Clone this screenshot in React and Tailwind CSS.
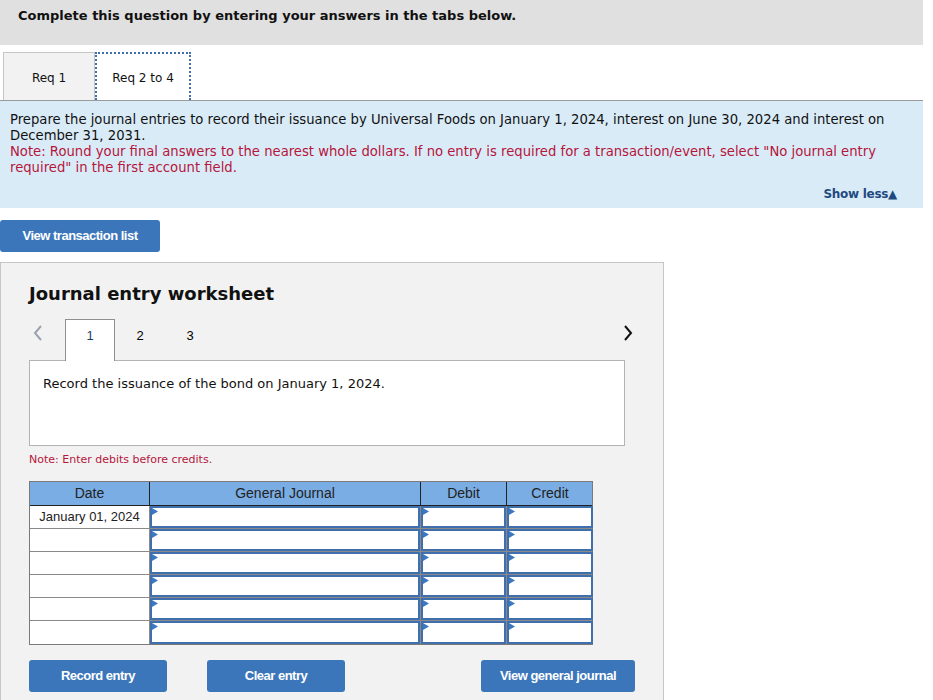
import React from "react";

const verdana = { fontFamily: '"DejaVu Sans", Verdana, sans-serif' };

function Tri() {
  return (
    <svg className="absolute left-0 top-0" width="6" height="7" viewBox="0 0 6 7">
      <polygon points="0,0 6,3.5 0,7" fill="#3b78c4" />
    </svg>
  );
}

function InputCell() {
  return (
    <div className="relative h-full bg-white border-2 border-[#3f70ad]">
      <Tri />
    </div>
  );
}

function Row({ date, last }) {
  return (
    <div className={`grid grid-cols-[120px_271px_86px_86px] h-[23px] ${last ? "" : "border-b border-[#8a8a8a]"}`}>
      <div className="bg-white border-r border-[#8a8a8a] flex items-center justify-center text-[13px] text-[#222] font-['Liberation_Sans',Arial,sans-serif]">
        {date}
      </div>
      <div className="border-r border-[#8a8a8a] bg-[#8a8a8a]">
        <InputCell />
      </div>
      <div className="border-r border-[#8a8a8a] bg-[#8a8a8a]">
        <InputCell />
      </div>
      <div className="bg-[#8a8a8a]">
        <InputCell />
      </div>
    </div>
  );
}

export default function App() {
  const rows = ["January 01, 2024", "", "", "", "", ""];
  return (
    <div className="w-[923px] bg-white text-[13px] text-black" style={verdana}>
      {/* header bar */}
      <div className="h-[45px] bg-[#e0e0e0] px-[18px] pt-[6px] font-bold text-[13px] text-[#111]">
        Complete this question by entering your answers in the tabs below.
      </div>

      {/* tabs */}
      <div className="flex pl-[3px] pt-[7px] border-b border-[#9a9a9a]">
        <div className="w-[92px] h-[48px] bg-[#f2f2f2] border border-b-0 border-[#c6c6c6] flex items-center justify-center pt-[2px] text-[12px] text-[#111]">
          Req 1
        </div>
        <div className="w-[96px] h-[48px] bg-white border-2 border-b-0 border-dotted border-[#3f70ad] flex items-center justify-center pt-[2px] text-[12px] text-[#111]">
          Req 2 to 4
        </div>
      </div>

      {/* info panel */}
      <div className="bg-[#daebf8] pl-[10px] pr-[26px] pt-[11px] pb-[6px] text-[13.2px] leading-[16px]">
        <p className="text-[#111]">
          Prepare the journal entries to record their issuance by Universal Foods on January 1, 2024, interest on June 30, 2024 and interest on December 31, 2031.
        </p>
        <p className="text-[#b5163b]">
          Note: Round your final answers to the nearest whole dollars. If no entry is required for a transaction/event, select "No journal entry required" in the first account field.
        </p>
        <div className="flex justify-end mt-[10px]">
          <span className="font-bold text-[12px] text-[#1f4a80] tracking-[-0.3px]">Show less▲</span>
        </div>
      </div>

      {/* view transaction list */}
      <div className="mt-[12px]">
        <button className="w-[160px] h-[32px] rounded-[3px] bg-[#3b76bb] text-white text-[13px] font-bold tracking-[-0.5px] font-['Liberation_Sans',Arial,sans-serif]">
          View transaction list
        </button>
      </div>

      {/* worksheet */}
      <div className="mt-[10px] w-[664px] h-[438px] bg-[#f2f2f2] border border-b-0 border-[#c6c6c6] pl-[28px] pr-[38px]">
        <h2 className="pt-[19px] text-[18px] font-bold text-[#111] leading-[24px]">
          Journal entry worksheet
        </h2>

        <div className="mt-[13px] flex items-end h-[41px] relative">
          <span className="w-[36px] h-[41px] flex items-start justify-start pl-[4px] pt-[6px]">
            <svg width="10" height="16" viewBox="0 0 10 16">
              <path d="M8 1 L2 8 L8 15" stroke="#9aa3ad" strokeWidth="2" fill="none" />
            </svg>
          </span>
          <div className="w-[50px] h-[42px] -mb-px bg-white border border-b-0 border-[#8f8f8f] flex items-start justify-center pt-[6px] text-[13px] text-[#1c3f66] font-['Liberation_Sans',Arial,sans-serif] relative z-10">
            1
          </div>
          <div className="w-[50px] h-[41px] flex items-start justify-center pt-[7px] text-[13px] font-['Liberation_Sans',Arial,sans-serif]">
            2
          </div>
          <div className="w-[50px] h-[41px] flex items-start justify-center pt-[7px] text-[13px] font-['Liberation_Sans',Arial,sans-serif]">
            3
          </div>
          <div className="flex-1" />
          <span className="w-[20px] h-[41px] flex items-start justify-center pt-[6px] -mr-[13px]">
            <svg width="10" height="16" viewBox="0 0 10 16">
              <path d="M2 1 L8 8 L2 15" stroke="#111" strokeWidth="2" fill="none" />
            </svg>
          </span>
        </div>

        <div className="w-[596px] h-[86px] bg-white border border-[#b3b3b3] px-[13px] pt-[13px] text-[13px] text-[#111]">
          Record the issuance of the bond on January 1, 2024.
        </div>

        <p className="mt-[6px] text-[11px] text-[#b5163b]">Note: Enter debits before credits.</p>

        <div className="mt-[12px] w-[564px] border border-[#7a7a7a]">
          <div className="grid grid-cols-[120px_271px_86px_86px] h-[24px] bg-[#7aade3] border-b border-[#222] text-[14px] text-[#222] font-['Liberation_Sans',Arial,sans-serif]">
            <div className="flex items-center justify-center border-r border-[#222]">Date</div>
            <div className="flex items-center justify-center border-r border-[#222]">General Journal</div>
            <div className="flex items-center justify-center border-r border-[#222]">Debit</div>
            <div className="flex items-center justify-center">Credit</div>
          </div>
          {rows.map((d, i) => (
            <Row key={i} date={d} last={i === rows.length - 1} />
          ))}
        </div>

        <div className="mt-[15px] flex items-center font-['Liberation_Sans',Arial,sans-serif]">
          <button className="w-[138px] h-[32px] rounded-[3px] bg-[#3b76bb] text-white text-[13px] font-bold tracking-[-0.5px]">
            Record entry
          </button>
          <button className="ml-[40px] w-[138px] h-[32px] rounded-[3px] bg-[#3b76bb] text-white text-[13px] font-bold tracking-[-0.5px]">
            Clear entry
          </button>
          <div className="flex-1" />
          <button className="w-[154px] h-[32px] rounded-[3px] bg-[#3b76bb] text-white text-[13px] font-bold tracking-[-0.5px] -mr-[10px]">
            View general journal
          </button>
        </div>
      </div>
    </div>
  );
}
